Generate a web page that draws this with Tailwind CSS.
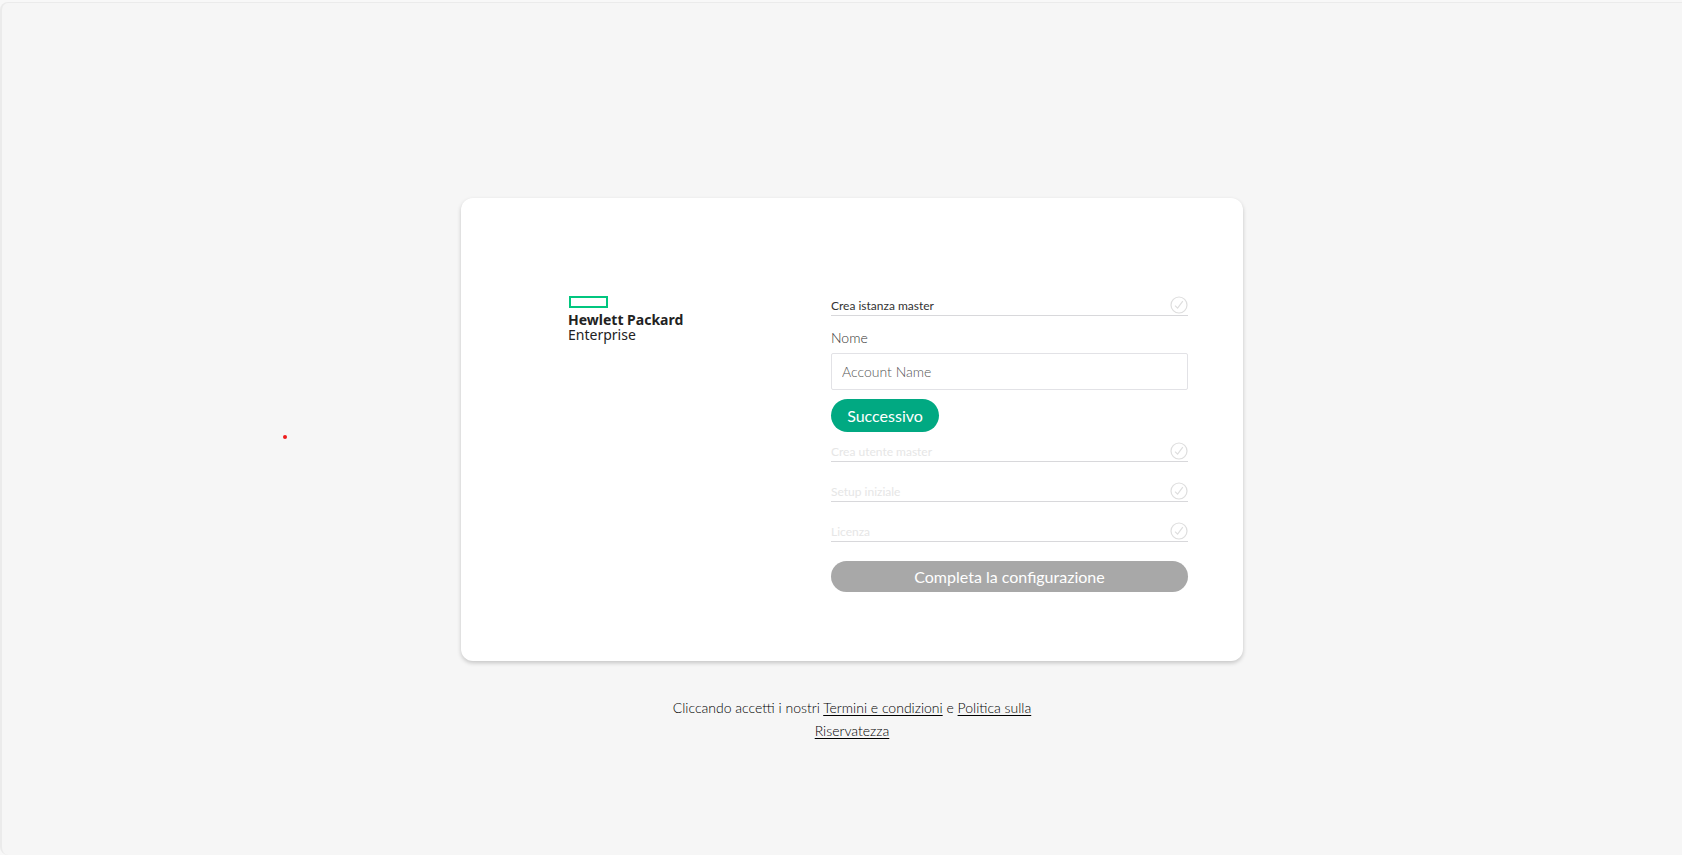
<!DOCTYPE html>
<html lang="it">
<head>
<meta charset="utf-8">
<meta name="viewport" content="width=device-width, initial-scale=1">
<title>Configurazione - Hewlett Packard Enterprise</title>
<script src="https://cdn.jsdelivr.net/npm/@tailwindcss/browser@4"></script>
</head>
<body class="flex min-h-screen bg-[#f8f8f8] pt-0.5 font-['Lato',sans-serif] text-[#333333]">
<svg class="hidden" aria-hidden="true">
  <symbol id="check" viewBox="0 0 18 18" fill="none" stroke="#dedede">
    <circle cx="9" cy="9" r="8" stroke-width="1.2"/>
    <path d="M5 9.6 7.6 12.2 12.8 5.2" stroke-width="1.2"/>
  </symbol>
</svg>
<div class="relative flex grow flex-col items-center rounded-l-lg border-t border-l-2 border-[#ebebeb] bg-[#f6f6f6] pt-[195px] pl-5">
  <span class="absolute top-[432px] left-[281px] size-1 rounded-full bg-[#ee1c1c]" aria-hidden="true"></span>
  <main class="flex w-full max-w-[782px] justify-between rounded-xl bg-white pt-[97px] pr-[55px] pb-[69px] pl-[107px] shadow-[0_2px_4px_rgba(0,0,0,0.2)]">
    <div class="mt-px flex flex-col items-start" role="img" aria-label="Hewlett Packard Enterprise">
      <div class="ml-px h-3 w-[39px] border-2 border-[#01c67f]"></div>
      <div class="mt-1 font-['Noto_Sans',sans-serif] text-[14px] leading-[15px] text-[#222222]">
        <div class="font-bold">Hewlett Packard</div>
        <div>Enterprise</div>
      </div>
    </div>
    <form class="flex w-[357px] flex-col">
      <div class="flex h-[21px] items-start justify-between border-b border-[#d8d8db]">
        <h2 class="mt-0.5 text-[12px] leading-[18px]">Crea istanza master</h2>
        <svg class="mt-px size-[18px]"><use href="#check"/></svg>
      </div>
      <label for="account" class="mt-3 text-[14px] leading-5 font-light">Nome</label>
      <input id="account" type="text" placeholder="Account Name" class="mt-[5px] h-[37px] w-full rounded-xs border border-[#e2e2e6] bg-white px-2.5 text-[14px] font-light placeholder:text-[#555555]">
      <button type="button" class="mt-[9px] h-[33px] w-[108px] rounded-full bg-[#01a982] text-[16px] text-white">Successivo</button>
      <div class="mt-[9px] flex h-[21px] items-start justify-between border-b border-[#d8d8db]">
        <h2 class="mt-0.5 text-[12px] leading-[18px] text-[#e6e6e6]">Crea utente master</h2>
        <svg class="mt-px size-[18px]"><use href="#check"/></svg>
      </div>
      <div class="mt-[19px] flex h-[21px] items-start justify-between border-b border-[#d8d8db]">
        <h2 class="mt-0.5 text-[12px] leading-[18px] text-[#e6e6e6]">Setup iniziale</h2>
        <svg class="mt-px size-[18px]"><use href="#check"/></svg>
      </div>
      <div class="mt-[19px] flex h-[21px] items-start justify-between border-b border-[#d8d8db]">
        <h2 class="mt-0.5 text-[12px] leading-[18px] text-[#e6e6e6]">Licenza</h2>
        <svg class="mt-px size-[18px]"><use href="#check"/></svg>
      </div>
      <button type="submit" disabled class="mt-[19px] h-[31px] w-full rounded-full bg-[#a8a8a8] text-[16px] text-white">Completa la configurazione</button>
    </form>
  </main>
  <p class="mt-[35px] max-w-[400px] text-center text-[14px] leading-[23px] font-light text-black">Cliccando accetti i nostri <a href="#termini" class="underline underline-offset-2">Termini e condizioni</a> e <a href="#privacy" class="underline underline-offset-2">Politica sulla Riservatezza</a></p>
</div>
</body>
</html>
